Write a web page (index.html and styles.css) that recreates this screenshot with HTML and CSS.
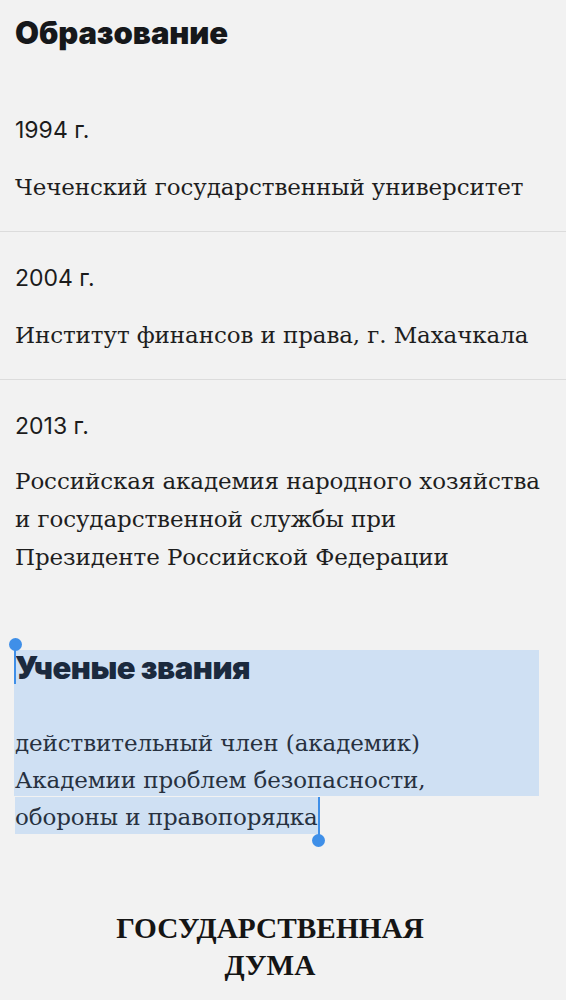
FILE: index.html
```html
<!DOCTYPE html>
<html lang="ru">
<head>
<meta charset="utf-8">
<link rel="stylesheet" href="styles.css">
</head>
<body>
<main class="page">
  <section class="edu">
    <h2 class="heading">Образование</h2>
    <div class="item">
      <div class="year">1994 г.</div>
      <div class="title">Чеченский государственный университет</div>
    </div>
    <div class="item">
      <div class="year">2004 г.</div>
      <div class="title">Институт финансов и права, г. Махачкала</div>
    </div>
    <div class="item item-last">
      <div class="year">2013 г.</div>
      <div class="title">Российская академия народного хозяйства<br>и государственной службы при<br>Президенте Российской Федерации</div>
    </div>
  </section>

  <section class="titles">
    <div class="sel">
      <h2 class="heading heading-sel">Ученые звания</h2>
      <p class="sel-text">действительный член (академик)<br>Академии проблем безопасности,</p>
    </div>
    <p class="sel-text sel-last"><span class="sel-span">обороны и правопорядка<span class="handle handle-end"><span class="bar"></span><span class="knob"></span></span></span></p>
    <span class="handle handle-start"><span class="knob"></span><span class="bar"></span></span>
  </section>

  <footer class="logo">ГОСУДАРСТВЕННАЯ<br>ДУМА</footer>
</main>
</body>
</html>
```

FILE: styles.css
```css
* { box-sizing: border-box; }
html, body { margin: 0; padding: 0; }
body {
  background: #f2f2f2;
  color: #1a1a1a;
  width: 566px;
  height: 1000px;
  overflow: hidden;
}
.page { display: flex; flex-direction: column; }

.heading {
  margin: 0;
  font-family: Inter, "Noto Sans", sans-serif;
  font-weight: 900;
  font-size: 31px;
  letter-spacing: -0.1px;
  line-height: 36px;
  color: #16181b;
}
.edu .heading { padding: 15px 15px 0; }

.item {
  border-bottom: 1px solid #dcdcdc;
  padding: 0 15px 25px;
}
.edu .heading + .item { padding-top: 64px; }
.item + .item { padding-top: 31px; }
.item-last { border-bottom: none; }

.year {
  font-family: Inter, "Noto Sans", sans-serif;
  font-size: 23px;
  line-height: 30px;
  color: #1c1c1c;
}
.title {
  margin-top: 23px;
  font-family: "DejaVu Serif", "Liberation Serif", serif;
  font-size: 23px;
  letter-spacing: -0.1px;
  line-height: 38px;
  color: #1e1e1e;
  white-space: nowrap;
}
.item-last .title { margin-top: 21px; }

.titles {
  position: relative;
  margin-top: 49px;
  padding-left: 14px;
}
.sel {
  display: flow-root;
  width: 525px;
  background: #cfe0f3;
}
.heading-sel {
  color: #1b2a3e;
  padding-left: 1px;
  letter-spacing: -0.5px;
}
.sel-text {
  margin: 0;
  font-family: "DejaVu Serif", "Liberation Serif", serif;
  font-size: 23px;
  letter-spacing: -0.1px;
  line-height: 37px;
  color: #27313f;
  padding-left: 1px;
  white-space: nowrap;
}
.sel .sel-text { margin-top: 39px; margin-bottom: -3px; }
.sel-last { display: flex; margin-top: 1px; }
.sel-span {
  position: relative;
  display: inline-block;
  padding: 4px 1px 0 0;
  line-height: 33px;
  background: #cfe0f3;
}

.handle {
  position: absolute;
  display: flex;
  flex-direction: column;
  align-items: center;
  width: 14px;
}
.handle-start { left: 8px; top: -12px; }
.handle-end { left: calc(100% - 7px); top: 0; }
.knob {
  width: 13px;
  height: 13px;
  border-radius: 50%;
  background: #3f8fe8;
}
.bar {
  width: 2px;
  background: #3f8fe8;
}
.handle-start .bar { height: 35px; margin-top: -2px; }
.handle-end .bar { height: 40px; margin-bottom: -3px; }

.logo {
  margin-top: 76px;
  padding-right: 26px;
  text-align: center;
  font-family: "Liberation Serif", "DejaVu Serif", serif;
  font-weight: 700;
  font-size: 29.3px;
  line-height: 37px;
  color: #151515;
}
```
